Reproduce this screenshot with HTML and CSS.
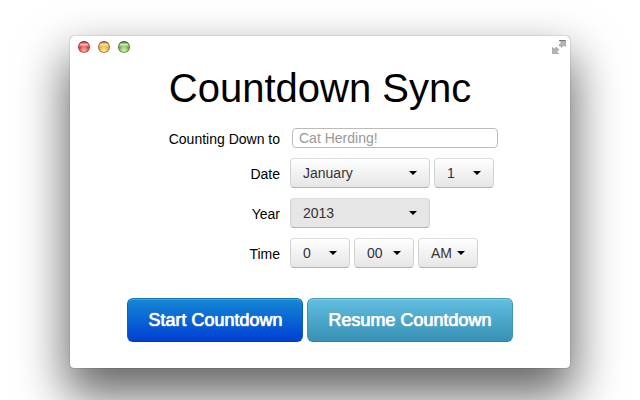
FILE: index.html
```html
<!DOCTYPE html>
<html lang="en">
  <head>
    <meta charset="utf-8">
    <title>Countdown Sync</title>
    <link rel="stylesheet" href="styles.css">
  </head>
  <body>
    <div class="window">
      <div class="titlebar">
        <button type="button" class="light red" aria-label="Close"></button>
        <button type="button" class="light yellow" aria-label="Minimize"></button>
        <button type="button" class="light green" aria-label="Zoom"></button>
        <button type="button" class="fullscreen" aria-label="Full screen">
          <svg width="14" height="14" viewBox="0 0 14 14">
            <path d="M7.500 .5h6v6l-2-1.500-2 2.500v-1.500h-1.500l-1-1 2.500-2z M.5 7.500l2 1.500 2-2v1.500h1l1.500 1-2.500 2.500 2 1.500h-6z" fill="#b4b4b4" stroke="#999" stroke-width=".7"/>
            <path d="M7 .5h6.500" stroke="#777"/>
          </svg>
        </button>
      </div>
      <h1>Countdown Sync</h1>
      <form>
        <div class="row name">
          <label for="event">Counting Down to</label>
          <input type="text" id="event" placeholder="Cat Herding!">
        </div>
        <div class="row">
          <label for="month">Date</label>
          <span class="drop wide"><select id="month"><option>January</option></select></span>
          <span class="drop"><select id="day" aria-label="Day"><option>1</option></select></span>
        </div>
        <div class="row">
          <label for="year">Year</label>
          <span class="drop wide hover"><select id="year"><option>2013</option></select></span>
        </div>
        <div class="row">
          <label for="hour">Time</label>
          <span class="drop"><select id="hour"><option>0</option></select></span>
          <span class="drop"><select id="minute" aria-label="Minute"><option>00</option></select></span>
          <span class="drop"><select id="ampm" aria-label="AM or PM"><option>AM</option></select></span>
        </div>
        <div class="actions">
          <button type="button" class="btn primary">Start Countdown</button>
          <button type="button" class="btn info">Resume Countdown</button>
        </div>
      </form>
    </div>
  </body>
</html>
```

FILE: styles.css
```css
* { box-sizing: border-box; }

html { overflow: hidden; }

body {
  margin: 0;
  padding: 36px 70px;
  background: #fff;
  color: #000;
  font-family: "Liberation Sans", Arial, sans-serif;
  font-size: 14px;
}

.window {
  padding-bottom: 26px;
  background: #fff;
  border-radius: 4px;
  box-shadow: 0 0 1px rgba(0,0,0,.7), 0 24px 48px 4px rgba(0,0,0,.6);
}

/* title bar */
.titlebar {
  display: flex;
  align-items: center;
  gap: 8px;
  height: 22px;
  padding: 0 4px 0 8px;
}

.light {
  width: 12px;
  height: 12px;
  padding: 0;
  border: 1px solid;
  border-radius: 50%;
}
.red {
  border-color: #6f2b2b #a03c3c #a86060;
  background: radial-gradient(ellipse at 50% 95%, #ffb5ac, transparent 60%), linear-gradient(#b93636, #fbb 25%, #e33f3f 50%, #f46a66);
}
.yellow {
  border-color: #75501c #a07030 #ab8a50;
  background: radial-gradient(ellipse at 50% 95%, #fff0a0, transparent 60%), linear-gradient(#b97828, #fde0a8 25%, #eba52f 50%, #f8cd62);
}
.green {
  border-color: #345a22 #4e7834 #76925e;
  background: radial-gradient(ellipse at 50% 95%, #d5f7ad, transparent 60%), linear-gradient(#4c8430, #cdeab8 25%, #71b349 50%, #a0d675);
}

.fullscreen {
  width: 14px;
  height: 14px;
  margin-left: auto;
  padding: 0;
  border: 0;
  background: none;
}
.fullscreen svg { display: block; }

h1 {
  margin: 6px 0 14px;
  font-size: 40px;
  font-weight: normal;
  line-height: 48px;
  text-align: center;
}

/* form rows */
.row {
  display: flex;
  align-items: center;
  gap: 4px;
  margin-bottom: 10px;
}
.row label {
  width: 42%;
  padding-top: 2px;
  margin-right: 6px;
  text-align: right;
}
.row.name { gap: 6px; height: 24px; margin-bottom: 8px; }

input {
  width: 206px;
  height: 20px;
  padding: 0 6px;
  border: 1px solid #bbb;
  border-radius: 4px;
  background: #fff;
  font: inherit;
}
input::placeholder { color: #999; opacity: 1; }

.drop {
  position: relative;
  width: 60px;
}
.drop.wide { width: 140px; }
.drop::after {
  content: "";
  position: absolute;
  top: 13px;
  right: 13px;
  border: 4px solid transparent;
  border-top-color: #000;
  border-bottom: 0;
  pointer-events: none;
}

select {
  display: block;
  appearance: none;
  width: 100%;
  height: 30px;
  padding: 0 0 0 12px;
  border: 1px solid #ccc;
  border-color: #dedede #d2d2d2 #b3b3b3;
  border-radius: 4px;
  background: linear-gradient(#fff, #e6e6e6);
  color: #333;
  font: inherit;
}
.hover select { background: #e6e6e6; }

/* big buttons */
.actions {
  display: flex;
  justify-content: center;
  gap: 4px;
  margin-top: 30px;
}
.btn {
  height: 44px;
  padding: 0 20px;
  border: 1px solid;
  border-radius: 6px;
  color: #fff;
  font-family: inherit;
  font-size: 18px;
  text-shadow: 0 0 1px #fff, 0 0 1px #fff, 0 -1px 0 rgba(0,0,0,.2);
  box-shadow: inset 0 1px 0 rgba(255,255,255,.2);
}
.primary {
  border-color: #1479bd #0762bf #0439bd;
  background: linear-gradient(#1588d4, #0040d4);
}
.info {
  border-color: #4c9fbc #4294b4 #2f85a6;
  background: linear-gradient(#62bfe0, #3691b5);
}
```
